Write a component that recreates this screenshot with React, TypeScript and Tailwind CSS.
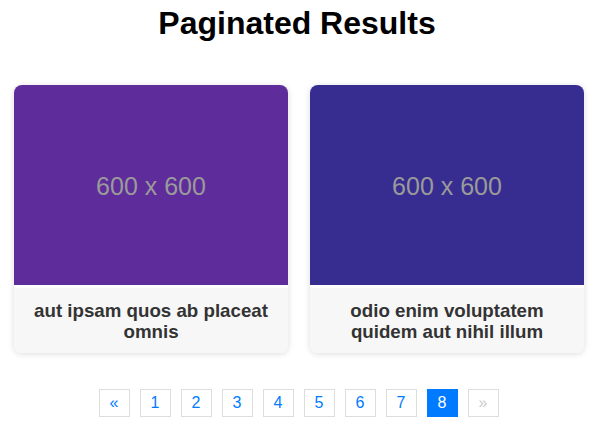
type Photo = {
  id: number;
  title: string;
  color: string;
};

const photos: Photo[] = [
  { id: 1, title: "aut ipsam quos ab placeat omnis", color: "bg-[#5f2c9c]" },
  { id: 2, title: "odio enim voluptatem quidem aut nihil illum", color: "bg-[#372d90]" },
];

const pages = [1, 2, 3, 4, 5, 6, 7, 8];
const current = 8;

export default function App() {
  return (
    <div className="w-[594px] h-[441px] bg-white font-['Liberation_Sans',Arial,sans-serif] overflow-hidden">
      <h1 className="pt-[5px] text-center text-[32px] leading-[37px] font-bold text-black">
        Paginated Results
      </h1>
      <div className="mt-[43px] flex gap-[22px] pl-[14px]">
        {photos.map((photo) => (
          <div
            key={photo.id}
            className="w-[274px] h-[268px] flex flex-col rounded-lg bg-white overflow-hidden shadow-[0_1px_6px_rgba(0,0,0,0.14)]"
          >
            <div className={`h-[200px] pt-[4px] flex items-center justify-center ${photo.color}`}>
              <span className="text-[25px] text-[#9a9a9a]">600 x 600</span>
            </div>
            <div className="mt-[3px] flex-1 bg-[#f7f7f7] px-2 flex items-center justify-center">
              <p className="text-center text-[18.72px] leading-[21px] font-bold text-[#333]">
                {photo.title}
              </p>
            </div>
          </div>
        ))}
      </div>
      <div className="mt-[36px] flex justify-center gap-[10px] pl-[3px]">
        <button className="w-[31px] h-[28px] border border-[#ddd] bg-white text-[16px] text-[#007bff]">
          «
        </button>
        {pages.map((p) => (
          <button
            key={p}
            className={
              p === current
                ? "w-[31px] h-[28px] border border-[#007bff] bg-[#007bff] text-[16px] text-white"
                : "w-[31px] h-[28px] border border-[#ddd] bg-white text-[16px] text-[#007bff]"
            }
          >
            {p}
          </button>
        ))}
        <button className="w-[31px] h-[28px] border border-[#ddd] bg-white text-[16px] text-[#ccc]">
          »
        </button>
      </div>
    </div>
  );
}
